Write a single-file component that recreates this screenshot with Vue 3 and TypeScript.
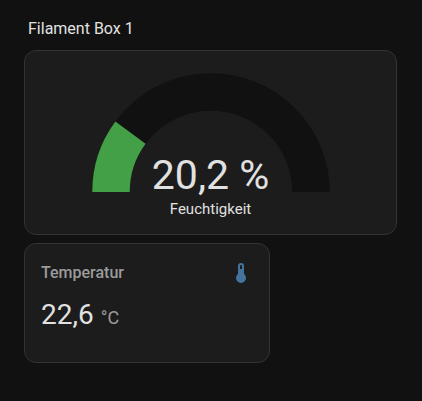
<script setup lang="ts">
import { computed } from 'vue'

interface Reading {
  name: string
  value: number
  unit: string
}

const title = 'Filament Box 1'
const humidity: Reading = { name: 'Feuchtigkeit', value: 20.2, unit: '%' }
const temperature: Reading = { name: 'Temperatur', value: 22.6, unit: '°C' }

const format = (n: number): string => n.toFixed(1).replace('.', ',')

// End point of the level arc on a half circle of radius 40
const levelPath = computed<string>(() => {
  const angle = (humidity.value / 100) * Math.PI
  const x = -40 * Math.cos(angle)
  const y = -40 * Math.sin(angle)
  return `M -40 0 A 40 40 0 0 1 ${x} ${y}`
})
</script>

<template>
  <main class="view">
    <h1 class="title">{{ title }}</h1>
    <div class="grid">
      <section class="card gauge-card">
        <svg class="gauge" viewBox="-50 -50 100 50" role="img" :aria-label="humidity.name">
          <path class="dial" d="M -40 0 A 40 40 0 0 1 40 0" />
          <path class="level" :d="levelPath" />
        </svg>
        <div class="gauge-value">{{ format(humidity.value) }} {{ humidity.unit }}</div>
        <div class="gauge-name">{{ humidity.name }}</div>
      </section>
      <section class="card entity-card">
        <header class="header">
          <h2 class="name">{{ temperature.name }}</h2>
          <svg class="icon" viewBox="0 0 24 24" aria-hidden="true">
            <path d="M15 13V5A3 3 0 0 0 9 5V13A5 5 0 1 0 15 13M12 4A1 1 0 0 1 13 5V8H11V5A1 1 0 0 1 12 4Z" />
          </svg>
        </header>
        <div class="info">
          <span class="value">{{ format(temperature.value) }}</span>
          <span class="unit">{{ temperature.unit }}</span>
        </div>
      </section>
    </div>
  </main>
</template>

<style>
body {
  margin: 0;
  background: #111111;
}
</style>

<style scoped>
.view {
  padding: 16px 25px 38px 24px;
  color: #e1e1e1;
  font-family: Roboto, "Liberation Sans", sans-serif;
}
.title {
  margin: 0 0 8px;
  padding: 0 4px;
  font-size: 16px;
  font-weight: 400;
  line-height: 26px;
}
.grid {
  display: grid;
  grid-template-columns: repeat(3, minmax(0, 1fr));
  gap: 8px;
}
.card {
  box-sizing: border-box;
  background: #1c1c1c;
  border: 1px solid #333333;
  border-radius: 12px;
}
.gauge-card {
  grid-column: 1 / -1;
  display: flex;
  flex-direction: column;
  align-items: center;
  padding: 16px;
}
.gauge {
  display: block;
  width: 100%;
  max-width: 250px;
}
.dial,
.level {
  fill: none;
  stroke-width: 15;
}
.dial {
  stroke: #111111;
}
.level {
  stroke: #43a047;
}
.gauge-value {
  margin-top: -42px;
  font-size: 41px;
  line-height: 50px;
  white-space: nowrap;
}
.gauge-name {
  font-size: 15px;
  line-height: 18px;
}
.entity-card {
  grid-column: span 2;
  min-height: 120px;
}
.header {
  display: flex;
  justify-content: space-between;
  padding: 8px 16px 0;
}
.name {
  margin: 0;
  color: #9b9b9b;
  font-size: 16px;
  font-weight: 500;
  line-height: 42px;
}
.icon {
  width: 24px;
  height: 24px;
  padding-top: 9px;
  fill: #44739e;
}
.info {
  padding: 7px 16px 16px;
  line-height: 28px;
}
.value {
  margin-right: 7px;
  font-size: 28px;
}
.unit {
  color: #9b9b9b;
  font-size: 18px;
}
</style>
